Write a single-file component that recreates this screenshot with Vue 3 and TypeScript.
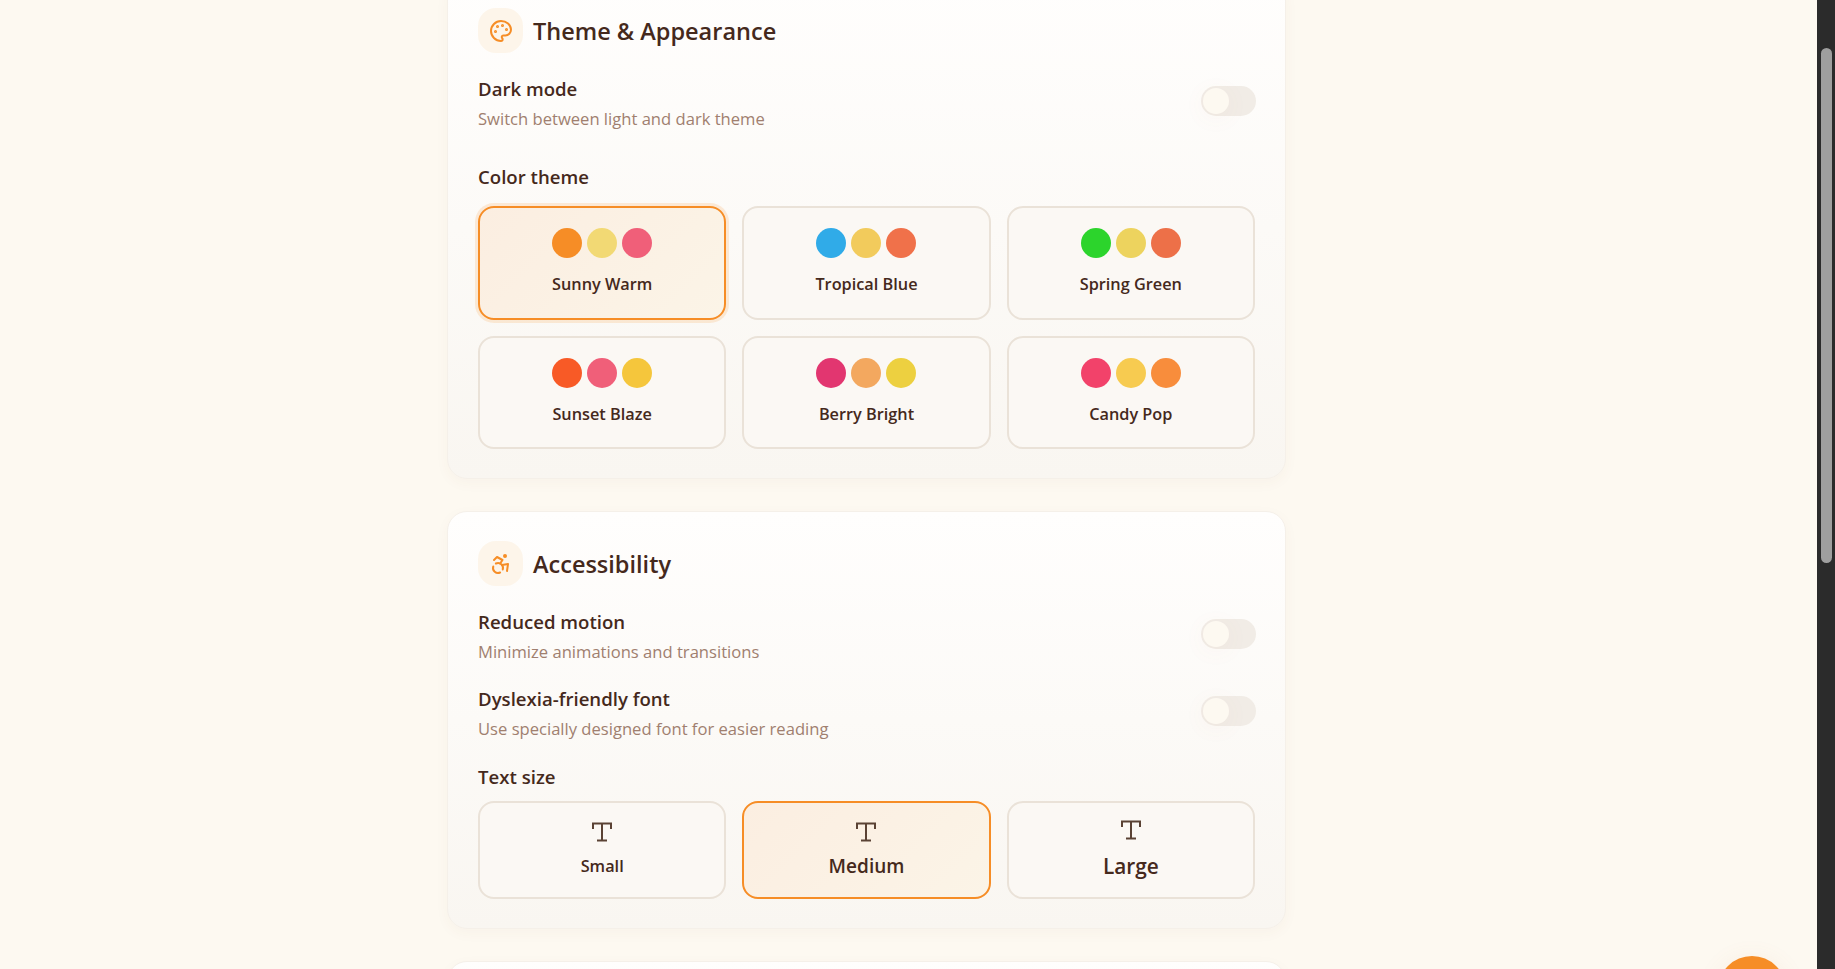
<template>
  <div class="page">
    <main class="content">
      <div class="column">
        <section class="card first">
          <header class="card-head">
            <span class="head-icon">
              <svg viewBox="0 0 24 24" width="24" height="24" fill="none" stroke="currentColor" stroke-width="2" stroke-linecap="round" stroke-linejoin="round">
                <circle cx="13.5" cy="6.5" r=".5" fill="currentColor" />
                <circle cx="17.5" cy="10.5" r=".5" fill="currentColor" />
                <circle cx="8.5" cy="7.5" r=".5" fill="currentColor" />
                <circle cx="6.5" cy="12.5" r=".5" fill="currentColor" />
                <path d="M12 2C6.5 2 2 6.5 2 12s4.5 10 10 10c.926 0 1.648-.746 1.648-1.688 0-.437-.18-.835-.437-1.125-.29-.289-.438-.652-.438-1.125a1.64 1.64 0 0 1 1.668-1.668h1.996c3.051 0 5.555-2.503 5.555-5.554C21.965 6.012 17.461 2 12 2z" />
              </svg>
            </span>
            <h2>Theme &amp; Appearance</h2>
          </header>

          <div class="setting">
            <div>
              <div class="setting-name">Dark mode</div>
              <div class="setting-desc">Switch between light and dark theme</div>
            </div>
            <span class="toggle"><span class="knob"></span></span>
          </div>

          <h3 class="group-title theme-title">Color theme</h3>
          <div class="grid">
            <div
              v-for="(theme, i) in themes"
              :key="theme.name"
              class="option theme-option"
              :class="{ selected: i === 0, focused: i === 0 }"
            >
              <div class="dots">
                <span v-for="c in theme.colors" :key="c" class="dot" :style="{ background: c }"></span>
              </div>
              <span class="theme-name">{{ theme.name }}</span>
            </div>
          </div>
        </section>

        <section class="card">
          <header class="card-head">
            <span class="head-icon">
              <svg viewBox="0 0 24 24" width="24" height="24" fill="none" stroke="currentColor" stroke-width="2" stroke-linecap="round" stroke-linejoin="round">
                <circle cx="16" cy="4" r="1" />
                <path d="m18 19 1-7-6 1" />
                <path d="m5 8 3-3 5.5 3-2.36 3.5" />
                <path d="M4.24 14.5a5 5 0 0 0 6.88 6" />
                <path d="M13.76 17.5a5 5 0 0 0-6.88-6" />
              </svg>
            </span>
            <h2>Accessibility</h2>
          </header>

          <div class="setting">
            <div>
              <div class="setting-name">Reduced motion</div>
              <div class="setting-desc">Minimize animations and transitions</div>
            </div>
            <span class="toggle"><span class="knob"></span></span>
          </div>
          <div class="setting">
            <div>
              <div class="setting-name">Dyslexia-friendly font</div>
              <div class="setting-desc">Use specially designed font for easier reading</div>
            </div>
            <span class="toggle"><span class="knob"></span></span>
          </div>

          <h3 class="group-title size-title">Text size</h3>
          <div class="grid">
            <div
              v-for="size in sizes"
              :key="size.name"
              class="option size-option"
              :class="{ selected: size.name === 'Medium' }"
            >
              <svg class="type-icon" viewBox="0 0 20 20" width="20" height="20" fill="none" stroke="currentColor" stroke-width="2">
                <path d="M1 7V1.5h18V7" />
                <path d="M10 1.5v17" />
                <path d="M5 18.5h10" />
              </svg>
              <span :class="size.cls">{{ size.name }}</span>
            </div>
          </div>
        </section>

        <section class="card last"></section>
      </div>
      <span class="fab"></span>
    </main>
    <aside class="scrollbar"><span class="thumb"></span></aside>
  </div>
</template>

<script setup lang="ts">
interface Theme {
  name: string;
  colors: string[];
}

const themes: Theme[] = [
  { name: 'Sunny Warm', colors: ['#f68d26', '#f2d974', '#f05f79'] },
  { name: 'Tropical Blue', colors: ['#30abe8', '#f2cb5c', '#f0714a'] },
  { name: 'Spring Green', colors: ['#2cd42c', '#edd35e', '#ed7048'] },
  { name: 'Sunset Blaze', colors: ['#f85a26', '#f05f79', '#f5c63c'] },
  { name: 'Berry Bright', colors: ['#e23670', '#f3a85f', '#edd040'] },
  { name: 'Candy Pop', colors: ['#f2426a', '#f7cb50', '#f88d3c'] },
];

const sizes = [
  { name: 'Small', cls: 'size-small' },
  { name: 'Medium', cls: 'size-medium' },
  { name: 'Large', cls: 'size-large' },
];
</script>

<style>
html,
body {
  margin: 0;
  overflow: hidden;
}
</style>

<style scoped>
.page {
  display: flex;
  height: 969px;
  overflow: hidden;
  background: #fdf9f1;
  color: #45291c;
  font-family: "Open Sans", "Noto Sans", sans-serif;
}

.content {
  position: relative;
  flex: 1;
  overflow: hidden;
  padding-left: 447px;
}

.column {
  width: 839px;
  margin-top: -22px;
  display: flex;
  flex-direction: column;
  gap: 32px;
}

.card {
  box-sizing: border-box;
  padding: 29px 30px 29px 30px;
  border: 1px solid #f5f0e9;
  border-radius: 20px;
  background: linear-gradient(180deg, #fffefd, #f9f6f1);
  box-shadow: 0 4px 14px rgba(120, 80, 40, 0.04);
}

.card.last {
  height: 200px;
}

.card-head {
  display: flex;
  align-items: center;
  gap: 10px;
  margin-bottom: 23px;
}

.head-icon {
  width: 45px;
  height: 45px;
  border-radius: 18px;
  background: #fdf5ea;
  color: #f68d26;
  display: flex;
  align-items: center;
  justify-content: center;
}

h2 {
  margin: 0;
  font-size: 23.5px;
  font-weight: 600;
}

.setting {
  display: flex;
  justify-content: space-between;
  align-items: flex-start;
  height: 76.5px;
}

.setting-name {
  font-size: 18.6px;
  font-weight: 600;
  line-height: 26px;
}

.setting-desc {
  margin-top: 4px;
  font-size: 16.6px;
  line-height: 26px;
  color: #a07f6f;
}

.toggle {
  position: relative;
  display: block;
  width: 55px;
  height: 30px;
  margin-top: 10px;
  margin-right: -1px;
  border-radius: 15px;
  background: #f1ece6;
}

.knob {
  position: absolute;
  left: 2px;
  top: 2px;
  width: 26px;
  height: 26px;
  border-radius: 50%;
  background: #fdf9f1;
  box-shadow: 0 4px 24px rgba(200, 120, 80, 0.06);
}

.group-title {
  margin: 0;
  font-size: 18.6px;
  font-weight: 600;
  line-height: 26px;
}

.theme-title {
  margin-top: 11.5px;
  margin-bottom: 16px;
}

.size-title {
  margin-top: 2px;
  margin-bottom: 11px;
}

.grid {
  display: grid;
  grid-template-columns: repeat(3, 1fr);
  gap: 16px;
}

.option {
  box-sizing: border-box;
  display: flex;
  flex-direction: column;
  align-items: center;
  border: 2px solid #eae2d8;
  border-radius: 16px;
  background: #fbf8f4;
}

.option.selected {
  border-color: #f68d26;
  background: linear-gradient(135deg, #fbeee1, #fbf4e7);
}

.option.focused {
  box-shadow: 0 0 0 3px rgba(246, 141, 38, 0.16);
}

.theme-option {
  height: 113.5px;
  padding-top: 20px;
}

.size-option {
  height: 97.5px;
  justify-content: center;
}

.dots {
  display: flex;
  gap: 5px;
  margin-bottom: 14px;
}

.dot {
  width: 30px;
  height: 30px;
  border-radius: 50%;
}

.theme-name {
  font-size: 16.3px;
  font-weight: 600;
  line-height: 24px;
}

.type-icon {
  color: #5a4234;
  margin-bottom: 12px;
}

.size-small {
  font-size: 16.3px;
  font-weight: 600;
  line-height: 24px;
}

.size-medium {
  font-size: 19px;
  font-weight: 600;
  line-height: 24px;
}

.size-large {
  font-size: 20.8px;
  font-weight: 600;
  line-height: 28px;
}

.fab {
  position: absolute;
  left: 1718px;
  top: 956px;
  width: 68px;
  height: 68px;
  border-radius: 50%;
  background: #f68d26;
  box-shadow: 0 4px 24px rgba(200, 120, 80, 0.1);
}

.scrollbar {
  position: relative;
  width: 18px;
  background: #2b2b2b;
}

.thumb {
  position: absolute;
  left: 4px;
  top: 48px;
  width: 11px;
  height: 515px;
  border-radius: 6px;
  background: #9f9f9f;
}
</style>
